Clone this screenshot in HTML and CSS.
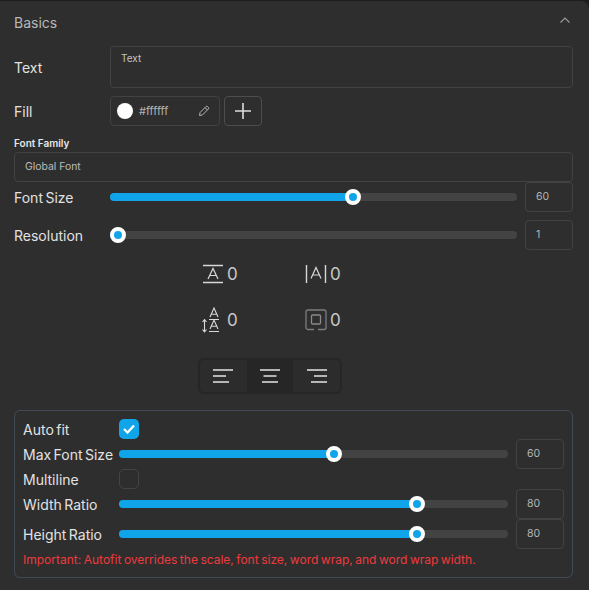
FILE: index.html
```html
<!DOCTYPE html>
<html lang="en">
<head>
    <meta charset="UTF-8">
    <meta name="viewport" content="width=device-width, initial-scale=1.0">
    <title>Basics</title>
    <link rel="stylesheet" href="styles.css">
</head>
<body>
    <section class="panel">
        <header class="panel-head">
            <span>Basics</span>
            <svg class="chevron" width="10" height="6" viewBox="0 0 10 6"><path d="M.5 5.500L5 1l4.500 4.500" fill="none" stroke="#9a9a9a" stroke-width="1.200"/></svg>
        </header>

        <div class="row row-text">
            <span class="label">Text</span>
            <div class="textbox">Text</div>
        </div>

        <div class="row row-fill">
            <span class="label">Fill</span>
            <div class="color-field">
                <span class="swatch"></span>
                <span class="hex">#ffffff</span>
                <svg class="pencil" width="12" height="12" viewBox="0 0 12 12"><path d="M1.500 10.500l.6-3L8 1.600a1.100 1.100 0 0 1 1.600 0l.8.8a1.100 1.100 0 0 1 0 1.600L4.500 9.900zM7 2.600L9.400 5" fill="none" stroke="#b5b5b5" stroke-width="1"/></svg>
            </div>
            <button class="add-btn">
                <svg width="16" height="16" viewBox="0 0 16 16"><path d="M8 0v16M0 8h16" stroke="#dcdcdc" stroke-width="1.600"/></svg>
            </button>
        </div>

        <div class="field-title">Font Family</div>
        <div class="select-box">Global Font</div>

        <div class="row row-slider">
            <span class="label">Font Size</span>
            <div class="slider"><div class="fill" style="width: 59.6%"><span class="thumb"></span></div></div>
            <div class="num">60</div>
        </div>
        <div class="row row-slider row-res">
            <span class="label">Resolution</span>
            <div class="slider"><div class="fill" style="width: 2%"><span class="thumb"></span></div></div>
            <div class="num">1</div>
        </div>

        <div class="typo-block">
            <div class="typo-grid">
                <div class="typo">
                    <svg width="22" height="20" viewBox="0 0 22 20"><path d="M1 1.500h20M1 18.500h20" stroke="#d8d8d8" stroke-width="1.400"/><path d="M6 15L11 4.500 16 15M7.800 11.500h6.400" fill="none" stroke="#d8d8d8" stroke-width="1.200"/></svg>
                    <span>0</span>
                </div>
                <div class="typo">
                    <svg width="22" height="20" viewBox="0 0 22 20"><path d="M1.500 1v18M20.500 1v18" stroke="#d8d8d8" stroke-width="1.400"/><path d="M6 14.500L11 3.500l5 11M7.800 11h6.400" fill="none" stroke="#d8d8d8" stroke-width="1.200"/></svg>
                    <span>0</span>
                </div>
                <div class="typo">
                    <svg width="22" height="26" viewBox="0 0 22 26"><path d="M8 10l4-9 4 9M9.200 7.200h5.600M7 12.500h10M8 22l4-9 4 9M9.200 19.200h5.600M7 24.500h10" fill="none" stroke="#d8d8d8" stroke-width="1.100"/><path d="M2.500 12.500v12.500M.5 15l2-2.300 2 2.300M.5 22.500l2 2.300 2-2.300" fill="none" stroke="#d8d8d8" stroke-width="1.100"/></svg>
                    <span>0</span>
                </div>
                <div class="typo">
                    <svg width="22" height="22" viewBox="0 0 22 22"><path d="M9 20.500H3a2 2 0 0 1-2-2V3a2 2 0 0 1 2-2h16a2 2 0 0 1 2 2v15.500a2 2 0 0 1-2 2h-6" fill="none" stroke="#7d7d7d" stroke-width="1.300"/><rect x="6.500" y="6" width="9" height="9" rx="1" fill="none" stroke="#8a8a8a" stroke-width="1.300"/></svg>
                    <span>0</span>
                </div>
            </div>
            <div class="align-group">
                <div class="align-btn">
                    <svg width="20" height="14" viewBox="0 0 20 14"><path d="M0 1h20M0 7h13M0 13h16" stroke="#e4e4e4" stroke-width="1.500"/></svg>
                </div>
                <div class="align-btn active">
                    <svg width="20" height="14" viewBox="0 0 20 14"><path d="M0 1h20M3.500 7h13M2 13h16" stroke="#e4e4e4" stroke-width="1.500"/></svg>
                </div>
                <div class="align-btn">
                    <svg width="20" height="14" viewBox="0 0 20 14"><path d="M0 1h20M7 7h13M4 13h16" stroke="#e4e4e4" stroke-width="1.500"/></svg>
                </div>
            </div>
        </div>

        <div class="autofit">
            <div class="fit-row fit-check">
                <span class="label">Auto fit</span>
                <span class="checkbox on">
                    <svg width="12" height="10" viewBox="0 0 12 10"><path d="M1 5l3.500 3.500L11 1.500" fill="none" stroke="#fff" stroke-width="2.300"/></svg>
                </span>
            </div>
            <div class="fit-row">
                <span class="label">Max Font Size</span>
                <div class="slider"><div class="fill" style="width: 55.3%"><span class="thumb"></span></div></div>
                <div class="num">60</div>
            </div>
            <div class="fit-row fit-check">
                <span class="label">Multiline</span>
                <span class="checkbox"></span>
            </div>
            <div class="fit-row">
                <span class="label">Width Ratio</span>
                <div class="slider"><div class="fill" style="width: 76.7%"><span class="thumb"></span></div></div>
                <div class="num">80</div>
            </div>
            <div class="fit-row">
                <span class="label">Height Ratio</span>
                <div class="slider"><div class="fill" style="width: 76.7%"><span class="thumb"></span></div></div>
                <div class="num">80</div>
            </div>
            <p class="warning">Important: Autofit overrides the scale, font size, word wrap, and word wrap width.</p>
        </div>
    </section>
</body>
</html>
```

FILE: styles.css
```css
html, body {
    margin: 0;
    height: 100%;
    background: #1d1d1d;
}
body {
    font-family: Inter, "Noto Sans", sans-serif;
    color: #d6d6d6;
    overflow: hidden;
}
.panel {
    box-sizing: border-box;
    height: 590px;
    margin-top: 1px;
    padding: 0 16px 0 14px;
    background: #2e2e2e;
    border-top-right-radius: 8px;
}
.panel-head {
    display: flex;
    justify-content: space-between;
    align-items: center;
    height: 45px;
    padding-bottom: 3px;
    box-sizing: border-box;
    font-size: 14px;
    color: #b8b8b8;
}
.chevron {
    margin: 0 3px 4px 0;
}
.row {
    display: flex;
    align-items: center;
}
.label {
    font-size: 14px;
    color: #e2e2e2;
    white-space: nowrap;
    word-spacing: -1.5px;
}
.row .label {
    flex: 0 0 96px;
}
.row-text {
    height: 42px;
}
.textbox {
    flex: 1;
    box-sizing: border-box;
    height: 42px;
    padding: 5px 10px;
    border: 1px solid #424242;
    border-radius: 4px;
    font-size: 10px;
    color: #c4c4c4;
}
.row-fill {
    height: 30px;
    margin-top: 8px;
}
.color-field {
    display: flex;
    align-items: center;
    box-sizing: border-box;
    width: 110px;
    height: 30px;
    padding: 0 9px 0 6px;
    border: 1px solid #424242;
    border-radius: 4px;
}
.swatch {
    width: 16px;
    height: 16px;
    border-radius: 50%;
    background: #fff;
}
.hex {
    flex: 1;
    margin-left: 6px;
    font-size: 11px;
    color: #b5b5b5;
}
.add-btn {
    display: flex;
    align-items: center;
    justify-content: center;
    box-sizing: border-box;
    width: 38px;
    height: 30px;
    margin-left: 4px;
    padding: 0;
    border: 1px solid #4d4d4d;
    border-radius: 4px;
    background: none;
}
.field-title {
    height: 26px;
    line-height: 34px;
    font-size: 10px;
    font-weight: 600;
    color: #e6e6e6;
}
.select-box {
    box-sizing: border-box;
    height: 30px;
    line-height: 28px;
    padding-left: 10px;
    border: 1px solid #424242;
    border-radius: 4px;
    font-size: 10.4px;
    color: #bcbcbc;
}
.row-slider {
    height: 30px;
}
.row-res {
    margin-top: 8px;
}
.slider {
    flex: 1;
    height: 8px;
    border-radius: 4px;
    background: #434343;
}
.fill {
    position: relative;
    height: 100%;
    border-radius: 4px;
    background: #10a5ea;
}
.thumb {
    position: absolute;
    right: -8px;
    top: -4px;
    box-sizing: border-box;
    width: 16px;
    height: 16px;
    border: 4px solid #fff;
    border-radius: 50%;
    background: #10a5ea;
}
.num {
    box-sizing: border-box;
    flex: 0 0 48px;
    height: 30px;
    margin-left: 8px;
    padding-left: 10px;
    line-height: 28px;
    border: 1px solid #424242;
    border-radius: 4px;
    font-size: 10.5px;
    color: #b5b5b5;
}
.typo-block {
    width: 144px;
    margin-left: 184px;
}
.typo-grid {
    display: grid;
    grid-template-columns: 104px 40px;
    grid-auto-rows: 46px;
    margin-top: 1px;
}
.typo {
    display: flex;
    align-items: center;
    gap: 3px;
    margin-left: 4px;
    font-size: 17px;
    color: #c8c8c8;
}
.typo:nth-child(even) {
    margin-left: 3px;
}
.align-group {
    display: flex;
    box-sizing: border-box;
    height: 36px;
    margin-top: 15px;
    border: 2px solid #262626;
    border-radius: 6px;
    background: #2c2c2c;
}
.align-btn {
    flex: 1;
    display: flex;
    align-items: center;
    justify-content: center;
}
.align-btn.active {
    background: #262626;
}
.autofit {
    box-sizing: border-box;
    height: 168px;
    margin-top: 16px;
    padding: 8px 8px 0 8px;
    border: 1px solid #434a57;
    border-radius: 6px;
}
.fit-row {
    display: flex;
    align-items: center;
    height: 30px;
}
.fit-row .label {
    flex: 0 0 96px;
}
.fit-check {
    height: 20px;
}
.checkbox {
    display: flex;
    align-items: center;
    justify-content: center;
    box-sizing: border-box;
    width: 20px;
    height: 20px;
    border: 1px solid #444;
    border-radius: 5px;
}
.checkbox.on {
    border: none;
    background: #10a5ea;
}
.warning {
    margin: 1px 0 0;
    height: 20px;
    line-height: 20px;
    font-size: 12px;
    color: #ee3a3d;
    white-space: nowrap;
    word-spacing: -0.85px;
}
```
